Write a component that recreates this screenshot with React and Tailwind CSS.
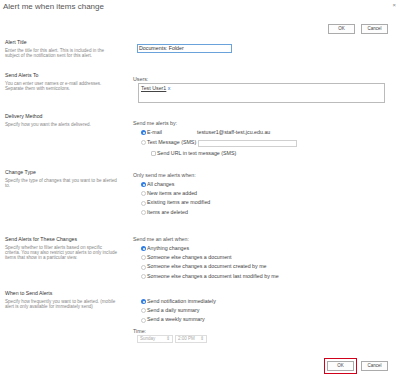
import React from 'react'

const Radio = ({ checked }) =>
    checked ? (
        <span className="w-[5px] h-[5px] rounded-full bg-[#2f7de6] flex items-center justify-center shrink-0">
            <span className="w-[2px] h-[2px] rounded-full bg-white"></span>
        </span>
    ) : (
        <span className="w-[5px] h-[5px] rounded-full border-[0.5px] border-[#c9c9c9] bg-white shrink-0"></span>
    )

const Option = ({ checked, children }) => (
    <div className="flex items-center gap-[1px] h-[9.3px] ml-[8px] text-[5.3px] text-[#444]">
        <Radio checked={checked} />
        <span>{children}</span>
    </div>
)

const Side = ({ title, lines }) => (
    <div>
        <div className="text-[5.2px] leading-[6px] text-[#333]">{title}</div>
        <div className="mt-[3px] text-[4.6px] leading-[5px] text-[#888]">
            {lines.map((l) => (
                <div key={l} className="whitespace-nowrap">{l}</div>
            ))}
        </div>
    </div>
)

const Btn = ({ children }) => (
    <button className="w-[27px] h-[10px] border-[0.5px] border-[#ababab] bg-[#fdfdfd] text-[4.5px] text-[#444] flex items-center justify-center">
        {children}
    </button>
)

export default function App() {
    return (
        <div className="w-[400px] h-[375px] bg-white overflow-hidden relative" style={{ fontFamily: '"Liberation Sans", Arial, sans-serif' }}>
            {/* Заголовок */}
            <div className="flex justify-between items-start">
                <div className="pl-[3px] pt-[2px] text-[8px] leading-[10px] text-[#555]">Alert me when items change</div>
                <div className="pr-[4px] pt-[1px] text-[6px] leading-[8px] text-[#888]">×</div>
            </div>

            {/* Верхние кнопки */}
            <div className="flex justify-end gap-[6px] pr-[12px] mt-[12px]">
                <Btn>OK</Btn>
                <Btn>Cancel</Btn>
            </div>

            <div className="pl-[5px] mt-[5px]">
                {/* Alert Title */}
                <div className="grid grid-cols-[128px_1fr] h-[33px]">
                    <Side title="Alert Title" lines={['Enter the title for this alert. This is included in the', 'subject of the notification sent for this alert.']} />
                    <div className="pt-[5px] pl-[4px]">
                        <div className="w-[95px] h-[9px] border border-[#6aa2dc] px-[1px] text-[5.3px] leading-[7px] text-[#333]">Documents: Folder</div>
                    </div>
                </div>

                {/* Send Alerts To */}
                <div className="grid grid-cols-[128px_1fr] h-[41px]">
                    <Side title="Send Alerts To" lines={['You can enter user names or e-mail addresses.', 'Separate them with semicolons.']} />
                    <div className="pt-[4px]">
                        <div className="text-[5.3px] leading-[6px] text-[#555]">Users:</div>
                        <div className="ml-[5px] mt-[1px] w-[247px] h-[20px] border-[0.5px] border-[#bbb] px-[2px] pt-[1px] text-[5.3px] leading-[7px]">
                            <span className="underline text-[#444]">Test User1</span>
                            <span className="text-[#2a6fc9]"> x</span>
                        </div>
                    </div>
                </div>

                {/* Delivery Method */}
                <div className="grid grid-cols-[128px_1fr] h-[56px]">
                    <Side title="Delivery Method" lines={['Specify how you want the alerts delivered.']} />
                    <div className="pt-[7px]">
                        <div className="text-[5.3px] leading-[6px] text-[#555]">Send me alerts by:</div>
                        <div className="mt-[2px]">
                            <div className="flex items-center h-[10px]">
                                <Option checked>E-mail</Option>
                                <span className="ml-[35px] text-[5.3px] text-[#444]">testuser1@staff-test.jcu.edu.au</span>
                            </div>
                            <div className="flex items-center h-[10px]">
                                <Option>Text Message (SMS)</Option>
                                <span className="ml-[2px] w-[99px] h-[7px] border-[0.5px] border-[#d0d0d0]"></span>
                            </div>
                            <div className="flex items-center gap-[1px] h-[11px] ml-[18px] text-[5.3px] text-[#444]">
                                <span className="w-[5px] h-[5px] rounded-[1px] border-[0.5px] border-[#c9c9c9] bg-white"></span>
                                <span>Send URL in text message (SMS)</span>
                            </div>
                        </div>
                    </div>
                </div>

                {/* Change Type */}
                <div className="grid grid-cols-[128px_1fr] h-[67px]">
                    <Side title="Change Type" lines={['Specify the type of changes that you want to be alerted', 'to.']} />
                    <div className="pt-[3px]">
                        <div className="text-[5.3px] leading-[6px] text-[#555]">Only send me alerts when:</div>
                        <div className="mt-[2px]">
                            <Option checked>All changes</Option>
                            <Option>New items are added</Option>
                            <Option>Existing items are modified</Option>
                            <Option>Items are deleted</Option>
                        </div>
                    </div>
                </div>

                {/* Send Alerts for These Changes */}
                <div className="grid grid-cols-[128px_1fr] h-[54px]">
                    <Side title="Send Alerts for These Changes" lines={['Specify whether to filter alerts based on specific', 'criteria. You may also restrict your alerts to only include', 'items that show in a particular view.']} />
                    <div>
                        <div className="text-[5.3px] leading-[6px] text-[#555]">Send me an alert when:</div>
                        <div className="mt-[2px]">
                            <Option checked>Anything changes</Option>
                            <Option>Someone else changes a document</Option>
                            <Option>Someone else changes a document created by me</Option>
                            <Option>Someone else changes a document last modified by me</Option>
                        </div>
                    </div>
                </div>

                {/* When to Send Alerts */}
                <div className="grid grid-cols-[128px_1fr]">
                    <Side title="When to Send Alerts" lines={['Specify how frequently you want to be alerted. (mobile', 'alert is only available for immediately send)']} />
                    <div className="pt-[7px]">
                        <Option checked>Send notification immediately</Option>
                        <Option>Send a daily summary</Option>
                        <Option>Send a weekly summary</Option>
                        <div className="mt-[3px] text-[5.3px] leading-[6px] text-[#555]">Time:</div>
                        <div className="flex gap-[2px] ml-[4px] mt-[1px]">
                            <div className="w-[36px] h-[8px] border-[0.5px] border-[#ddd] flex items-center justify-between px-[2px] text-[4.5px] text-[#aaa]">
                                <span>Sunday</span>
                                <span>⇕</span>
                            </div>
                            <div className="w-[32px] h-[8px] border-[0.5px] border-[#ddd] flex items-center justify-between px-[2px] text-[4.5px] text-[#aaa]">
                                <span>2:00 PM</span>
                                <span>⇕</span>
                            </div>
                        </div>
                    </div>
                </div>
            </div>

            {/* Нижние кнопки */}
            <div className="flex justify-end items-center gap-[4px] pr-[12px] mt-[15px]">
                <div className="border border-[#d0021b] p-[2px]">
                    <Btn>OK</Btn>
                </div>
                <Btn>Cancel</Btn>
            </div>
        </div>
    )
}
